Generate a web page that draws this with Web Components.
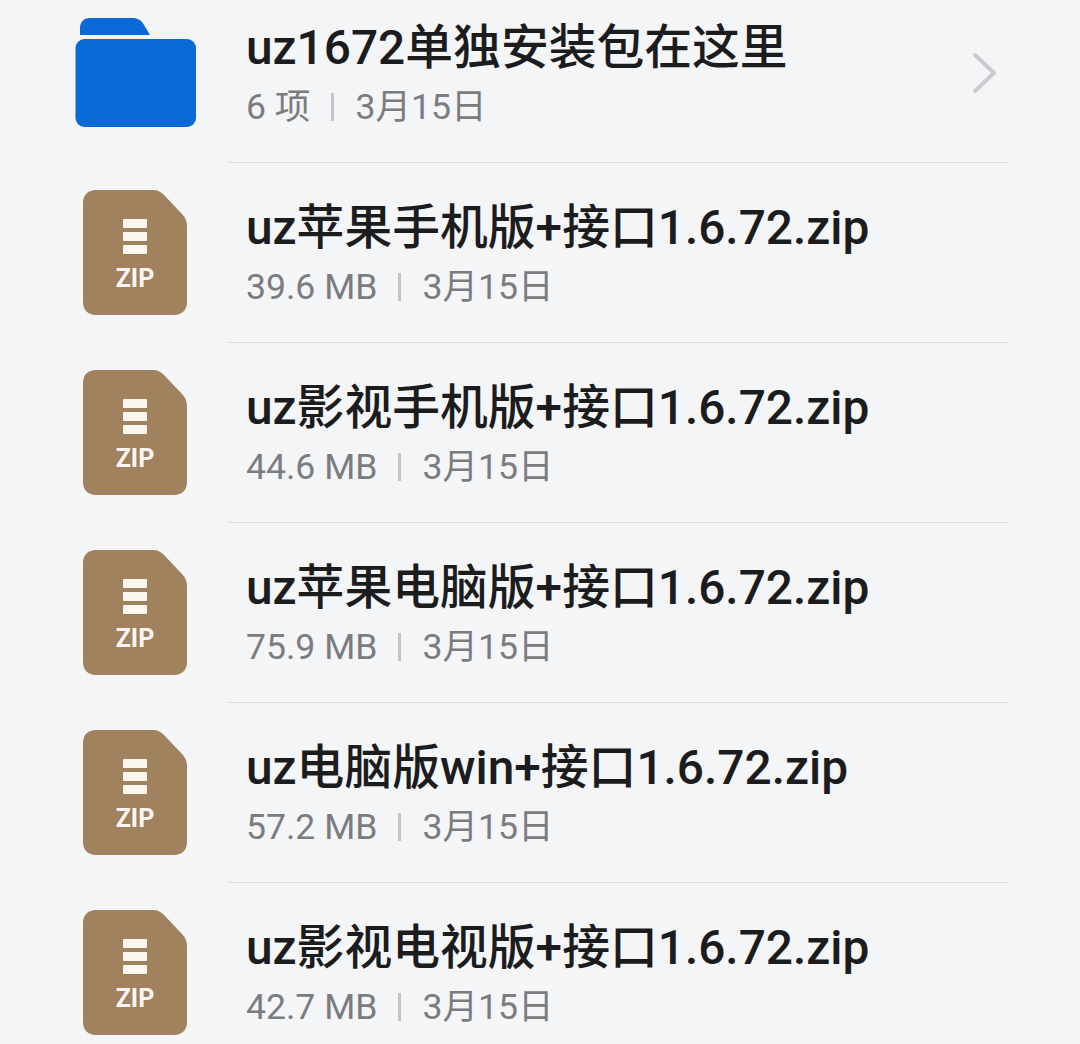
<!DOCTYPE html>
<html lang="zh">
<head>
<meta charset="utf-8">
<title>文件列表</title>
<style>
  html, body { margin: 0; height: 100%; overflow: hidden; background: #f4f5f7; }
</style>
</head>
<body>
<file-list>
  <file-row first title-text="uz1672单独安装包在这里" size="6 项" date="3月15日" kind="folder" arrow></file-row>
  <file-row title-text="uz苹果手机版+接口1.6.72.zip" size="39.6 MB" date="3月15日"></file-row>
  <file-row title-text="uz影视手机版+接口1.6.72.zip" size="44.6 MB" date="3月15日"></file-row>
  <file-row title-text="uz苹果电脑版+接口1.6.72.zip" size="75.9 MB" date="3月15日"></file-row>
  <file-row title-text="uz电脑版win+接口1.6.72.zip" size="57.2 MB" date="3月15日"></file-row>
  <file-row title-text="uz影视电视版+接口1.6.72.zip" size="42.7 MB" date="3月15日"></file-row>
</file-list>
<script>
"use strict";
(() => {
  var FileIcon = class extends HTMLElement {
    constructor() {
      super();
      this.attachShadow({ mode: "open" });
    }
    connectedCallback() {
      var kind = this.getAttribute("kind");
      var art = kind === "folder" ? `
        <svg class="folder" width="122" height="110" viewBox="0 0 122 110">
          <path d="M5 18V11C5 5 9 1 15 1H57C63 1 66 3 69 8L75 18H5Z" fill="#0a69d6"/>
          <rect x="0.5" y="22" width="120.5" height="88" rx="9" fill="#0a69d6"/>
        </svg>` : `
        <div class="zip">
          <svg width="104" height="125" viewBox="0 0 104 125">
            <path d="M13 0H70C75 0 78 2 81 5L99 24C102 27 104 31 104 36V112C104 120 99 125 91 125H13C5 125 0 120 0 112V13C0 5 5 0 13 0Z" fill="#a1825f"/>
            <rect x="40" y="29" width="24" height="9" rx="1" fill="#fbf6ef"/>
            <rect x="40" y="42" width="24" height="9" rx="1" fill="#fbf6ef"/>
            <rect x="40" y="55" width="24" height="9" rx="1" fill="#fbf6ef"/>
          </svg>
          <span>ZIP</span>
        </div>`;
      this.shadowRoot.innerHTML = `<style>${this.styles}</style>${art}`;
    }
    get styles() {
      return `
        :host { display: block; }
        svg { display: block; }
        .folder { margin-left: 75px; }
        .zip { position: relative; margin-left: 83px; width: 104px; height: 125px; }
        .zip span {
          position: absolute;
          left: 0;
          right: 0;
          top: 75px;
          text-align: center;
          font: 700 25px/28px Roboto, "Liberation Sans", sans-serif;
          color: #fbf6ef;
        }
      `;
    }
  };
  customElements.define("file-icon", FileIcon);

  var FileRow = class extends HTMLElement {
    constructor() {
      super();
      this.attachShadow({ mode: "open" });
    }
    connectedCallback() {
      var kind = this.getAttribute("kind") || "zip";
      var arrow = this.hasAttribute("arrow") ? `
        <svg class="arrow" width="26" height="42" viewBox="0 0 26 42">
          <path d="M3 3L22 21L3 39" fill="none" stroke="#c9cbce" stroke-width="4" stroke-linecap="round" stroke-linejoin="round"/>
        </svg>` : "";
      this.shadowRoot.innerHTML = `
        <style>${this.styles}</style>
        <file-icon class="icon" kind="${kind}"></file-icon>
        <div class="body">
          <div class="text">
            <div class="title">${this.getAttribute("title-text")}</div>
            <div class="meta">
              <span>${this.getAttribute("size")}</span>
              <i></i>
              <span>${this.getAttribute("date")}</span>
            </div>
          </div>
          ${arrow}
        </div>
      `;
    }
    get styles() {
      return `
        :host {
          display: grid;
          grid-template-columns: 228px 780px;
          height: 180px;
          box-sizing: border-box;
        }
        :host([first]) { height: 163px; }
        .icon { padding-top: 27px; }
        :host([first]) .icon { padding-top: 17px; }
        .body {
          display: flex;
          justify-content: space-between;
          border-bottom: 1px solid #dcdde0;
          padding-left: 18px;
          padding-top: 37px;
        }
        :host([first]) .body { padding-top: 20px; }
        .title {
          font: 500 47.8px/56px Roboto, "Noto Sans CJK SC", sans-serif;
          color: #1b1c1e;
          white-space: nowrap;
        }
        .meta {
          display: flex;
          align-items: center;
          margin-top: 9px;
          font: 400 35.6px/44px Roboto, "Noto Sans CJK SC", sans-serif;
          color: #7a7c80;
          white-space: nowrap;
        }
        .meta i {
          width: 3px;
          height: 28px;
          margin: 0 21px 0 21px;
          background: #c2c4c7;
        }
        .arrow { margin: 32px 10px 0 0; }
      `;
    }
  };
  customElements.define("file-row", FileRow);

  var FileList = class extends HTMLElement {
    constructor() {
      super();
      this.attachShadow({ mode: "open" });
      this.shadowRoot.innerHTML = `<style>
        :host { display: flex; flex-direction: column; width: 1080px; height: 1044px; overflow: hidden; background: #f4f5f7; }
        ::slotted(*) { flex: none; }
      </style><slot></slot>`;
    }
  };
  customElements.define("file-list", FileList);
})();
</script>
</body>
</html>
